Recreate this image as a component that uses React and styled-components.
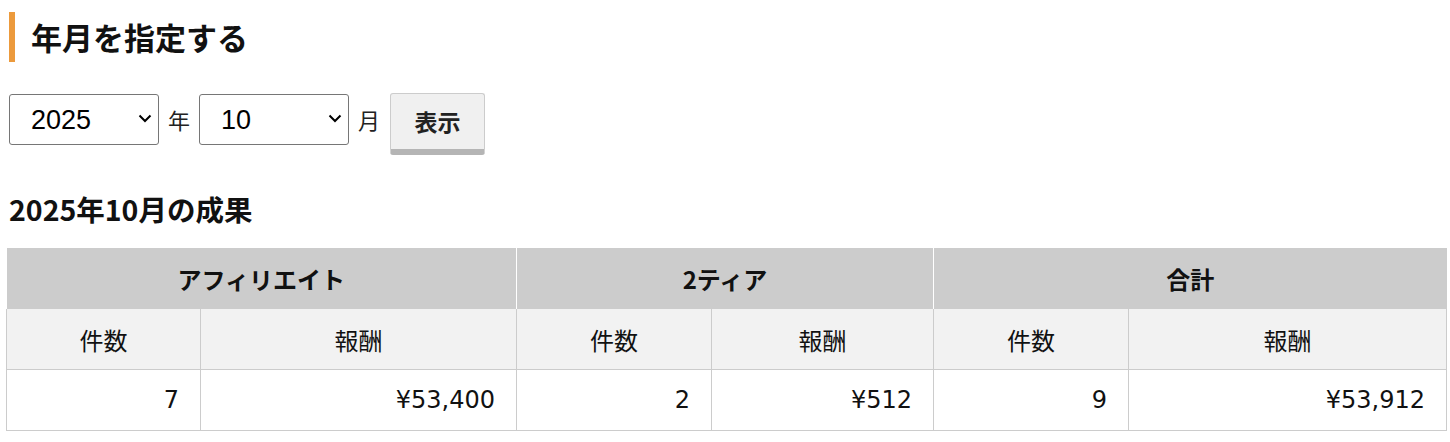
import React, { useState } from "react";
import styled, { createGlobalStyle } from "styled-components";

const GlobalStyle = createGlobalStyle`
    body {
        margin: 0;
        font-family: "DejaVu Sans", "Noto Sans CJK JP", sans-serif;
        color: #111;
        background: #fff;
    }
`

const Page = styled.div`
    padding: 12px 4px 0 6px;
`

const Heading = styled.h2`
    margin: 0 0 0 3px;
    padding-left: 16px;
    border-left: 6px solid #ec9a3c;
    font-size: 31px;
    font-weight: 700;
    line-height: 50px;
    font-family: "Noto Sans CJK JP", sans-serif;
`

const Form = styled.form`
    display: flex;
    align-items: flex-start;
    gap: 9px;
    margin: 32px 0 0 3px;
`

// セレクトと矢印をまとめる枠
const SelectBox = styled.span`
    position: relative;
    display: inline-block;
    width: 150px;
    height: 51px;
`

const Select = styled.select`
    appearance: none;
    width: 100%;
    height: 100%;
    padding: 0 30px 0 21px;
    font-size: 27px;
    font-family: "Liberation Sans", Arial, sans-serif;
    color: #000;
    background: #fff;
    border: 1px solid #767676;
    border-radius: 3px;
`

const Chevron = styled.svg`
    position: absolute;
    right: 7px;
    top: 19px;
    width: 14px;
    height: 10px;
    pointer-events: none;
`

const Unit = styled.span`
    font-size: 22px;
    line-height: 51px;
    color: #222;
    font-family: "Noto Sans CJK JP", sans-serif;
`

const ShowButton = styled.button`
    width: 95px;
    height: 62px;
    margin-top: -1px;
    margin-left: 1px;
    padding: 0 0 2px;
    font-size: 23px;
    font-weight: 700;
    font-family: "Noto Sans CJK JP", sans-serif;
    color: #222;
    background: #f0f0f0;
    border: 1px solid #ccc;
    border-bottom: 6px solid #b5b5b5;
    border-radius: 3px;
    cursor: pointer;
`

const ResultTitle = styled.h3`
    margin: 36px 0 0 3px;
    font-size: 28.5px;
    font-weight: 700;
    line-height: 36px;
    font-family: "Noto Sans CJK JP", sans-serif;
`

const Table = styled.table`
    width: 1440px;
    margin-top: 21px;
    border-collapse: collapse;
    table-layout: fixed;
    font-size: 24px;
`

const GroupHead = styled.th`
    height: 61px;
    padding: 0;
    background: #cccccc;
    font-size: 24px;
    font-weight: 700;
    font-family: "Noto Sans CJK JP", sans-serif;
    border-left: 1px solid #fff;
    border-right: 1px solid #fff;
    &:first-child { border-left: none; }
    &:last-child { border-right: none; }
`

const SubHead = styled.th`
    height: 60px;
    padding: 0;
    background: #f2f2f2;
    font-size: 24px;
    font-weight: 400;
    font-family: "Noto Sans CJK JP", sans-serif;
    border: 1px solid #ccc;
    border-top: none;
`

const Cell = styled.td`
    height: 60px;
    padding: 0 21px 0 15px;
    text-align: right;
    border: 1px solid #ccc;
`

const widths = [194, 316, 195, 222, 195, 318];

const groups = ["アフィリエイト", "2ティア", "合計"];

const data = [
    { count: 7, reward: "¥53,400" },
    { count: 2, reward: "¥512" },
    { count: 9, reward: "¥53,912" },
];

const ArrowDown = () => (
    <Chevron viewBox="0 0 14 10">
        <path d="M1.5 2.5 L7 8 L12.5 2.5" fill="none" stroke="#000" strokeWidth="2" />
    </Chevron>
);

const App = () => {
    const [year, setYear] = useState("2025");
    const [month, setMonth] = useState("10");

    return (
        <Page>
            <GlobalStyle />
            <Heading>年月を指定する</Heading>
            <Form onSubmit={(e) => e.preventDefault()}>
                <SelectBox>
                    <Select value={year} onChange={(e) => setYear(e.target.value)}>
                        {["2023", "2024", "2025"].map((y) => <option key={y} value={y}>{y}</option>)}
                    </Select>
                    <ArrowDown />
                </SelectBox>
                <Unit>年</Unit>
                <SelectBox>
                    <Select value={month} onChange={(e) => setMonth(e.target.value)}>
                        {Array.from({ length: 12 }, (_, i) => String(i + 1)).map((m) => <option key={m} value={m}>{m}</option>)}
                    </Select>
                    <ArrowDown />
                </SelectBox>
                <Unit>月</Unit>
                <ShowButton type="submit">表示</ShowButton>
            </Form>
            <ResultTitle>{year}年{month}月の成果</ResultTitle>
            <Table>
                <colgroup>
                    {widths.map((w, i) => <col key={i} style={{ width: w }} />)}
                </colgroup>
                <thead>
                    <tr>
                        {groups.map((g) => <GroupHead key={g} colSpan={2}>{g}</GroupHead>)}
                    </tr>
                    <tr>
                        {groups.map((g) => (
                            <React.Fragment key={g}>
                                <SubHead>件数</SubHead>
                                <SubHead>報酬</SubHead>
                            </React.Fragment>
                        ))}
                    </tr>
                </thead>
                <tbody>
                    <tr>
                        {data.map((d, i) => (
                            <React.Fragment key={i}>
                                <Cell>{d.count}</Cell>
                                <Cell>{d.reward}</Cell>
                            </React.Fragment>
                        ))}
                    </tr>
                </tbody>
            </Table>
        </Page>
    );
};

export default App;
